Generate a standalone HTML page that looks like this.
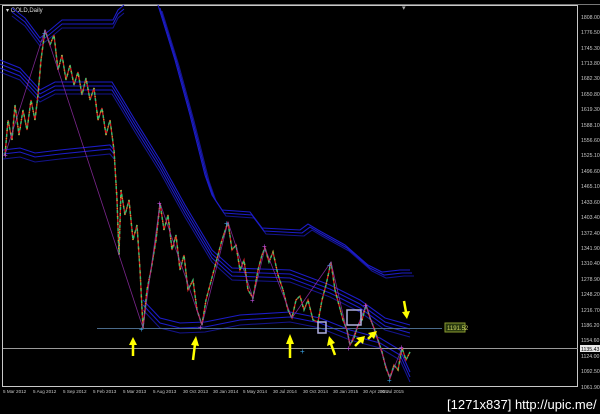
<!DOCTYPE html>
<html><head><meta charset="utf-8"><style>
html,body{margin:0;padding:0;background:#000;width:600px;height:414px;overflow:hidden}
svg{display:block}
text{font-family:"Liberation Sans",sans-serif}
</style></head><body>
<svg width="600" height="414" viewBox="0 0 600 414" xmlns="http://www.w3.org/2000/svg">
<defs>
<polyline id="pr" points="5,155 8,120 12,140 15,105 19,135 23,110 27,130 31,100 35,120 38,95 41,60 45,30 50,45 54,35 58,70 62,55 66,80 70,65 74,85 78,72 82,95 86,78 90,100 94,88 98,120 102,108 106,135 110,120 114,150 117,200 119,255 121,190 125,215 129,200 133,240 137,225 140,270 143,328 147,290 151,270 156,240 160,203 164,230 168,215 172,250 176,235 180,270 184,255 188,290 193,280 197,310 202,325 206,300 210,285 214,270 218,255 222,240 228,222 232,250 236,245 240,270 244,260 248,290 253,298 258,270 262,255 265,248 269,262 273,252 278,275 283,290 288,310 292,318 296,300 300,296 304,310 308,300 313,320 318,322 322,300 326,285 331,262 335,290 339,305 343,320 347,330 350,345 354,338 358,325 362,320 366,305 370,318 374,328 378,340 382,352 386,368 390,378 394,365 398,370 402,348 406,360 410,352"/>
</defs>
<rect width="600" height="414" fill="#000"/>
<rect x="2.5" y="5.5" width="575" height="381" fill="none" stroke="#c8c8c8" stroke-width="1"/>
<line x1="0" y1="4.5" x2="600" y2="4.5" stroke="#777" />
<text x="6" y="12" font-size="6" fill="#ddd">▾ GOLD,Daily</text>
<text x="402" y="10" font-size="7" fill="#aaa">▾</text>

<g fill="none" stroke="#1c1cc8" stroke-width="1.1">
<g id="ba"><path d="M12,8 L25,18 L40,38 L50,30 L62,20 L113,20 L118,10 L124,5"/></g>
<use href="#ba" transform="translate(0,4)"/>
<use href="#ba" transform="translate(0,8)" opacity="0.7"/>
<g id="bb"><path d="M158,5 L175,60 L190,115 L205,175 L212,195 L222,210 L250,212 L262,228 L300,230 L308,224 L318,230 L345,245 L368,265 L382,272 L400,270 L410,270"/></g>
<use href="#bb" transform="translate(2,3)"/>
<use href="#bb" transform="translate(4,6)" opacity="0.7"/>
<g id="bc"><path d="M0,60 L20,68 L40,90 L55,82 L112,82 L120,95 L135,120 L160,160 L185,205 L212,250 L232,268 L290,270 L330,285 L360,300 L385,318 L410,325"/></g>
<use href="#bc" transform="translate(0,4)"/>
<use href="#bc" transform="translate(0,8)"/>
<use href="#bc" transform="translate(0,12)" opacity="0.7"/>
<g id="bd"><path d="M3,150 L20,148 L35,153 L60,150 L110,145 L114,150"/></g>
<use href="#bd" transform="translate(0,4)"/>
<use href="#bd" transform="translate(0,9)" opacity="0.7"/>
<g id="be"><path d="M143,300 L160,318 L180,323 L205,322 L240,315 L290,312 L320,318 L350,330 L380,338 L400,350 L410,372"/></g>
<use href="#be" transform="translate(0,5)"/>
<use href="#be" transform="translate(0,10)" opacity="0.7"/>
</g>

<line x1="97" y1="328.5" x2="442" y2="328.5" stroke="#4a6a8a" stroke-width="1"/>
<line x1="3" y1="348.5" x2="578" y2="348.5" stroke="#9a9a9a" stroke-width="1"/>
<rect x="445" y="323" width="20" height="9" fill="#2a3a10" stroke="#8a9a30"/>
<text x="447" y="330" font-size="6" fill="#c8d060">1191.52</text>

<g fill="none">
<g stroke="#d82020" stroke-width="1.3"><use href="#pr"/></g>
<g stroke="#30c070" stroke-width="1.4" stroke-dasharray="3 3"><use href="#pr"/></g>
<g stroke="#d0a030" stroke-width="1.4" stroke-dasharray="1 7"><use href="#pr"/></g>
<polyline stroke="#9a30b0" stroke-width="0.8" opacity="0.8" points="5,155 45,30 119,255 143,328 160,203 202,325 228,222 253,298 265,248 292,318 331,262 350,345 366,305 390,378 402,348"/>
</g>
<g font-size="8" fill="#3aa0e0">
<text x="42" y="36">+</text><text x="139" y="332">+</text><text x="224" y="226">+</text>
<text x="300" y="354">+</text><text x="327" y="268">+</text><text x="387" y="383">+</text></g>
<g font-size="8" fill="#c050e0"><text x="3" y="158">+</text><text x="157" y="206">+</text><text x="198" y="330">+</text><text x="262" y="249">+</text><text x="250" y="303">+</text><text x="363" y="308">+</text><text x="399" y="350">+</text><text x="346" y="351">+</text></g>
<rect x="318" y="322" width="8" height="11" fill="none" stroke="#b0b0e0" stroke-width="1.5"/>
<rect x="347" y="310" width="14" height="15" fill="none" stroke="#b0b0e0" stroke-width="1.5"/>

<g stroke="#ffff00" stroke-width="2.5" fill="#ffff00">
<line x1="133" y1="356" x2="133" y2="344"/><polygon points="129,345 137,345 133,337" stroke="none"/>
<line x1="193" y1="360" x2="195" y2="344"/><polygon points="191,345 199,346 196,336" stroke="none"/>
<line x1="290" y1="358" x2="290" y2="343"/><polygon points="286,344 294,344 290,334" stroke="none"/>
<line x1="335" y1="355" x2="331" y2="344"/><polygon points="327,346 335,343 329,336" stroke="none"/>
<line x1="355" y1="346" x2="360" y2="341"/><polygon points="356,338 363,344 365,336" stroke="none"/>
<line x1="368" y1="339" x2="372" y2="335"/><polygon points="368,333 374,339 377,331" stroke="none"/>
<line x1="404" y1="301" x2="406" y2="312"/><polygon points="402,312 410,311 407,319" stroke="none"/>
</g>

<g font-size="5.2" fill="#c8c8c8">
<text x="581" y="19">1808.00</text><text x="581" y="34">1776.50</text><text x="581" y="50">1745.30</text><text x="581" y="65">1713.80</text><text x="581" y="80">1682.30</text><text x="581" y="96">1650.80</text><text x="581" y="111">1619.30</text><text x="581" y="127">1588.10</text><text x="581" y="142">1556.60</text><text x="581" y="157">1525.10</text><text x="581" y="173">1496.60</text><text x="581" y="188">1465.10</text><text x="581" y="204">1433.60</text><text x="581" y="219">1403.40</text><text x="581" y="235">1372.40</text><text x="581" y="250">1341.90</text><text x="581" y="265">1310.40</text><text x="581" y="281">1278.90</text><text x="581" y="296">1248.20</text><text x="581" y="312">1216.70</text><text x="581" y="327">1186.20</text><text x="581" y="342">1154.60</text><text x="581" y="358">1124.00</text><text x="581" y="373">1092.50</text><text x="581" y="389">1061.90</text>
</g>
<rect x="580" y="345" width="20" height="7" fill="#e8e8e8"/>
<text x="581" y="351" font-size="5.2" fill="#000">1135.43</text>

<g font-size="4.6" fill="#c8c8c8">
<text x="3" y="393">5 Mar 2012</text><text x="33" y="393">5 Aug 2012</text><text x="63" y="393">5 Sep 2012</text><text x="93" y="393">5 Feb 2013</text><text x="123" y="393">5 Mar 2013</text><text x="153" y="393">5 Aug 2013</text><text x="183" y="393">30 Oct 2013</text><text x="213" y="393">30 Jan 2014</text><text x="243" y="393">5 May 2014</text><text x="273" y="393">30 Jul 2014</text><text x="303" y="393">30 Oct 2014</text><text x="333" y="393">30 Jan 2015</text><text x="363" y="393">30 Apr 2015</text><text x="380" y="393">30 Jul 2015</text>
</g>

<text x="447" y="409" font-size="13" fill="#fff">[1271x837] http://upic.me/</text>
</svg>
</body></html>
